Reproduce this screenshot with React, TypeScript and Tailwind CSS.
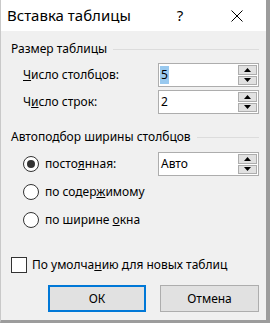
import React from "react";

function Spin() {
  return (
    <div className="flex flex-col gap-[1px] w-[19px] h-[20px] mr-[1px]">
      <div className="flex-1 bg-[#e1e1e1] border border-[#adadad] flex items-center justify-center">
        <svg width="7" height="4" viewBox="0 0 7 4"><path d="M3.5 0L7 4H0z" fill="#000" /></svg>
      </div>
      <div className="flex-1 bg-[#e1e1e1] border border-[#adadad] flex items-center justify-center">
        <svg width="7" height="4" viewBox="0 0 7 4"><path d="M0 0H7L3.5 4z" fill="#000" /></svg>
      </div>
    </div>
  );
}

function NumBox({ value, selected }: { value: string; selected?: boolean }) {
  return (
    <div className="w-[101px] h-[24px] bg-white border border-[#adadad] flex items-center justify-between">
      <span className={"ml-[1px] px-[1px] leading-[18px] " + (selected ? "bg-[#99c9ef]" : "")}>{value}</span>
      <Spin />
    </div>
  );
}

function GroupTitle({ text }: { text: string }) {
  return (
    <div className="flex items-center gap-[6px] h-[16px]">
      <span className="whitespace-nowrap">{text}</span>
      <div className="flex-1 h-px bg-[#dcdcdc]" />
    </div>
  );
}

function Radio({ checked, children }: { checked?: boolean; children: React.ReactNode }) {
  return (
    <div className="flex items-center gap-[6px]">
      <div className="w-[16px] h-[16px] rounded-full border border-[#333] bg-white flex items-center justify-center">
        {checked && <div className="w-[8px] h-[8px] rounded-full bg-[#333]" />}
      </div>
      <span>{children}</span>
    </div>
  );
}

export default function App() {
  return (
    <div className="w-[270px] h-[323px] bg-[#f0f0f0] border-l border-l-[#c9c9c9] border-r-[4px] border-r-[#9c9c9c] border-b-[3px] border-b-[#9c9c9c] text-[12px] text-black font-['Noto_Sans',sans-serif] flex flex-col overflow-hidden">
      <div className="h-[31px] bg-white flex items-center shrink-0 pr-[6px]">
        <span className="pl-[6px] text-[15px] leading-none flex-1">Вставка таблицы</span>
        <div className="w-[46px] flex justify-center">
          <span className="text-[15px] leading-none">?</span>
        </div>
        <div className="w-[46px] ml-[11px] flex justify-center">
          <svg width="12" height="12" viewBox="0 0 12 12">
            <path d="M0.5 0.5L11.5 11.5M11.5 0.5L0.5 11.5" stroke="#000" strokeWidth="1" />
          </svg>
        </div>
      </div>
      <div className="pl-[10px] pr-[7px] flex flex-col">
        <div className="mt-[10px]">
          <GroupTitle text="Размер таблицы" />
        </div>
        <div className="mt-[6px] flex items-center justify-between pl-[12px]">
          <span><u>Ч</u>исло столбцов:</span>
          <NumBox value="5" selected />
        </div>
        <div className="mt-[3px] flex items-center justify-between pl-[12px]">
          <span>Ч<u>и</u>сло строк:</span>
          <NumBox value="2" />
        </div>
        <div className="mt-[15px]">
          <GroupTitle text="Автоподбор ширины столбцов" />
        </div>
        <div className="mt-[7px] flex items-center justify-between pl-[12px]">
          <Radio checked>посто<u>я</u>нная:</Radio>
          <NumBox value="Авто" />
        </div>
        <div className="mt-[4px] h-[24px] flex items-center pl-[12px]">
          <Radio>по содер<u>ж</u>имому</Radio>
        </div>
        <div className="mt-[4px] h-[24px] flex items-center pl-[12px]">
          <Radio>по ширине <u>о</u>кна</Radio>
        </div>
        <div className="mt-[21px] h-[24px] flex items-center gap-[5px]">
          <div className="w-[16px] h-[16px] bg-white border border-[#333]" />
          <span>По умолча<u>н</u>ию для новых таблиц</span>
        </div>
        <div className="mt-[8px] flex justify-end gap-[14px]">
          <button className="w-[98px] h-[27px] bg-[#e1e1e1] border-2 border-[#0078d7] flex items-center justify-center">ОК</button>
          <button className="w-[99px] h-[27px] bg-[#e1e1e1] border border-[#adadad] flex items-center justify-center">Отмена</button>
        </div>
      </div>
    </div>
  );
}
